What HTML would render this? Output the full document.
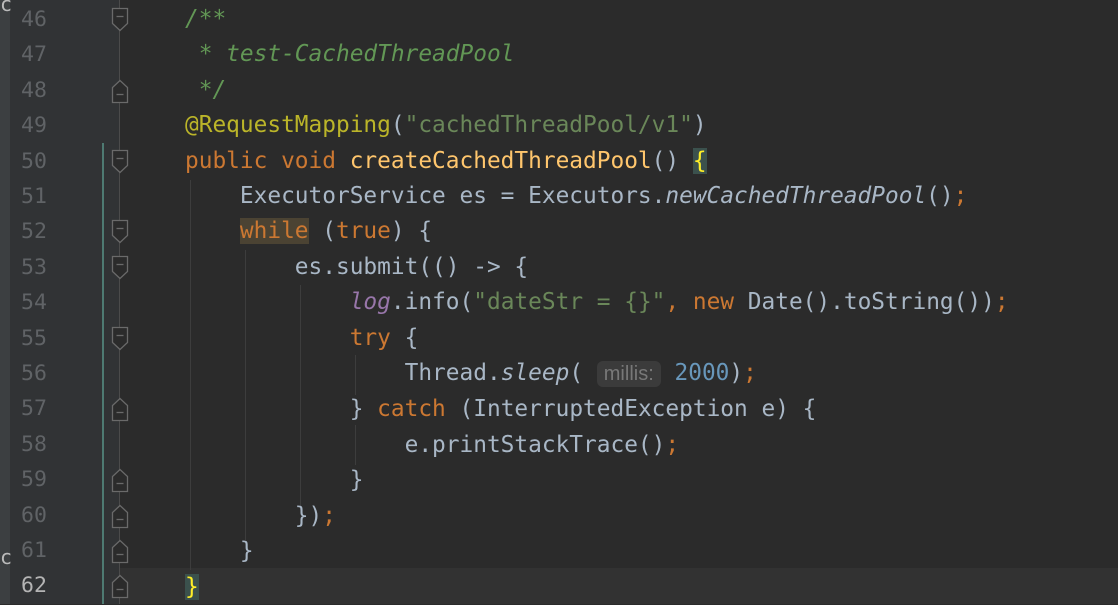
<!DOCTYPE html>
<html><head><meta charset="utf-8"><style>
body{margin:0;width:1118px;height:604px;overflow:hidden;background:#2b2b2b;font-family:"DejaVu Sans Mono",monospace;}
.strip{position:absolute;left:0;top:0;width:10px;height:604px;background:#3c3f41;}
.gut{position:absolute;left:10px;top:0;width:110px;height:604px;background:#313335;}
.cur{position:absolute;left:120px;top:568px;width:998px;height:36px;background:#323232;}
.teal{position:absolute;left:102px;top:143px;width:2px;height:461px;background:#4e7a72;}
.fold{position:absolute;left:119px;top:0;width:1px;height:604px;background:#4b4b4b;}
.guide{position:absolute;width:1px;background:#3d3d3d;}
.num{position:absolute;left:21px;width:40px;color:#606366;font-size:21.5px;}
.code{position:absolute;left:185px;top:2px;font-size:22.8px;line-height:35.4px;color:#a9b7c6;white-space:pre;}
.k{color:#cc7832}.c{color:#629755;font-style:italic}.a{color:#bbb529}.s{color:#6a8759}.n{color:#6897bb}.f{color:#ffc66d}.i{font-style:italic}.l{color:#9876aa;font-style:italic}
.hint{background:#3b3b3b;color:#787878;font-family:"Liberation Sans",sans-serif;font-size:20px;border-radius:6px;padding:2px 7px;}
.cc{position:absolute;left:0;color:#bbb;font-size:20px;}
.icon{position:absolute;left:111px;}
</style></head><body>
<div class="strip"></div><div class="gut"></div><div class="cur"></div><div class="fold"></div><div class="teal"></div>
<div class="cc" style="top:-8px">c</div><div class="cc" style="top:545px">c</div>
<div class="guide" style="left:190px;top:180px;height:390px"></div>
<div class="guide" style="left:245px;top:250px;height:290px"></div>
<div class="guide" style="left:300px;top:285px;height:225px"></div>
<div class="guide" style="left:355px;top:355px;height:40px"></div>
<div class="guide" style="left:355px;top:425px;height:40px"></div>
<div id="nums"></div>
<div class="code"><span class="c">/**</span>
<span class="c"> * test-CachedThreadPool</span>
<span class="c"> */</span>
<span class="a">@RequestMapping</span>(<span class="s">"cachedThreadPool/v1"</span>)
<span class="k">public void </span><span class="f">createCachedThreadPool</span>() <span style="color:#ffef28;background:#3b514d">{</span>
    ExecutorService es = Executors.<span class="i">newCachedThreadPool</span>()<span class="k">;</span>
    <span class="k" style="background:#4b4333">while</span> (<span class="k">true</span>) {
        es.submit(() -&gt; {
            <span class="l">log</span>.info(<span class="s">"dateStr = {}"</span><span class="k">, new </span>Date().toString())<span class="k">;</span>
            <span class="k">try </span>{
                Thread.<span class="i">sleep</span>( <span class="hint">millis:</span> <span class="n">2000</span>)<span class="k">;</span>
            } <span class="k">catch </span>(InterruptedException e) {
                e.printStackTrace()<span class="k">;</span>
            }
        })<span class="k">;</span>
    }
<span style="color:#ffef28;background:#3b514d">}</span></div>
<script>
var h='',opens=[0,4,6,7,9],closes=[2,11,13,14,15,16];
for(var i=0;i<17;i++){var t=2+i*35.4;
h+='<div class="num" style="top:'+(t+5)+'px;'+(i==16?'color:#b4b4b4':'')+'">'+(46+i)+'</div>';
if(opens.indexOf(i)>=0)h+='<svg class="icon" style="top:'+(t+5)+'px" width="18" height="26"><path d="M1.5 1.5h15v15l-7.5 7l-7.5-7z" fill="#2b2b2b" stroke="#6a6a6a" stroke-width="1.3"/><path d="M5.5 9.5h7" stroke="#6a6a6a" stroke-width="1.3"/></svg>';
if(closes.indexOf(i)>=0)h+='<svg class="icon" style="top:'+(t+5)+'px" width="18" height="26"><path d="M1.5 24.5h15v-15l-7.5-7l-7.5 7z" fill="#2b2b2b" stroke="#6a6a6a" stroke-width="1.3"/><path d="M5.5 16.5h7" stroke="#6a6a6a" stroke-width="1.3"/></svg>';}
document.getElementById('nums').innerHTML=h;
</script>
</body></html>
